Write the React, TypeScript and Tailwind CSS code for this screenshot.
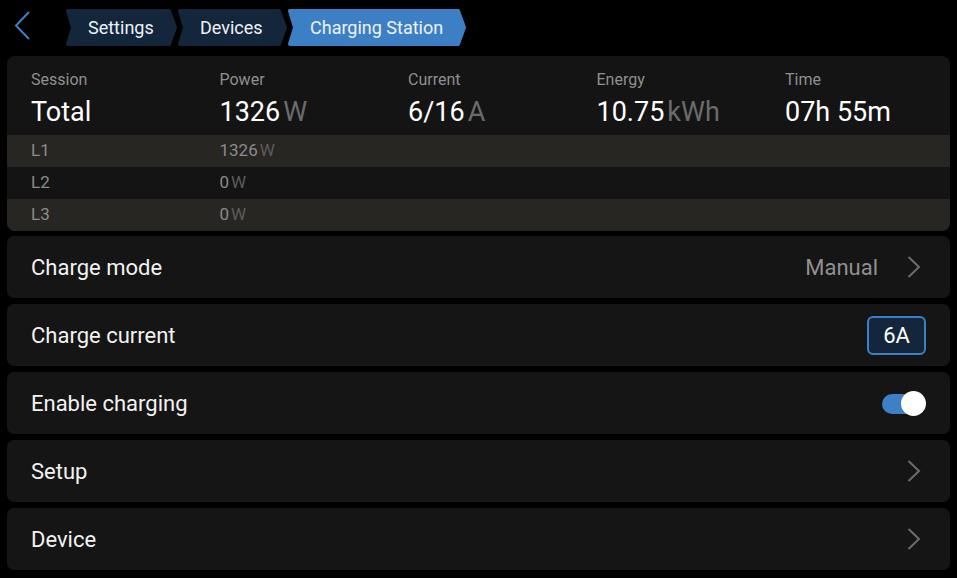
import type { ReactNode } from 'react';

const FONT = 'font-["Roboto","Liberation_Sans",sans-serif]';

type Stat = { label: string; value: string; unit?: string };

const STATS: Stat[] = [
  { label: 'Session', value: 'Total' },
  { label: 'Power', value: '1326', unit: 'W' },
  { label: 'Current', value: '6/16', unit: 'A' },
  { label: 'Energy', value: '10.75', unit: 'kWh' },
  { label: 'Time', value: '07h 55m' }
];

const PHASES = [
  { name: 'L1', power: '1326', striped: true },
  { name: 'L2', power: '0', striped: false },
  { name: 'L3', power: '0', striped: true }
];

function Crumb({ label, width, active }: { label: string; width: number; active?: boolean }) {
  const h = 37;
  const d = 6;
  const fill = active ? '#3d7fc4' : '#14263b';
  const pts = `2,2 ${width - d - 2},2 ${width - 2},${h / 2} ${width - d - 2},${h - 2} 2,${h - 2} ${d + 1},${h / 2}`;
  return (
    <div className="relative flex h-[37px] items-center pl-[22px]" style={{ width }}>
      <svg className="absolute inset-0" width={width} height={h} viewBox={`0 0 ${width} ${h}`}>
        <polygon points={pts} fill={fill} stroke={fill} strokeWidth={4} strokeLinejoin="round" />
      </svg>
      <span className="relative text-[18px] leading-none text-[#eef2f6]">{label}</span>
    </div>
  );
}

function Chevron() {
  return (
    <svg width="24" height="24" viewBox="0 0 24 24" fill="none">
      <path d="M6.5 2 L17 12 L6.5 22" stroke="#6c6c6c" strokeWidth="2" />
    </svg>
  );
}

function ListRow({ label, children }: { label: string; children?: ReactNode }) {
  return (
    <div className="flex h-[62px] items-center justify-between rounded-[7px] bg-[#151515] pl-6 pr-6">
      <span className="text-[22px] text-[#f2f2f2]">{label}</span>
      <div className="flex items-center">{children}</div>
    </div>
  );
}

export default function App() {
  return (
    <div className={`${FONT} h-[578px] w-[957px] overflow-hidden bg-black`}>
      <div className="flex h-[56px] items-start">
        <div className="ml-[13px] mt-[11px] h-[30px] w-[20px]">
          <svg width="20" height="30" viewBox="0 0 20 30" fill="none">
            <path d="M16 1 L3 14.5 L16 28" stroke="#3d80c5" strokeWidth="2" />
          </svg>
        </div>
        <div className="ml-[33px] mt-[9px] flex gap-px">
          <Crumb label="Settings" width={111} />
          <Crumb label="Devices" width={109} />
          <Crumb label="Charging Station" width={178} active />
        </div>
      </div>

      <div className="mx-[7px] overflow-hidden rounded-[8px] bg-[#141414]">
        <div className="flex h-[79px] pl-6 pt-[14px]">
          {STATS.map((stat) => (
            <div key={stat.label} className="w-[188.5px] shrink-0">
              <div className="text-[16px] leading-[19px] text-[#8f8f8f]">{stat.label}</div>
              <div className="mt-[7px] text-[27px] leading-[32px] text-white">
                {stat.value}
                {stat.unit && <span className="ml-[3px] text-[#6b6b6b]">{stat.unit}</span>}
              </div>
            </div>
          ))}
        </div>
        {PHASES.map((phase) => (
          <div
            key={phase.name}
            className={`flex h-[32px] items-center pl-6 text-[17px] ${phase.striped ? 'bg-[#282622]' : 'bg-[#141414]'}`}
          >
            <span className="w-[188.5px] text-[#8c8c8c]">{phase.name}</span>
            <span className="text-[#8a8a8a]">
              {phase.power}
              <span className="ml-[2px] text-[#5c5c5c]">W</span>
            </span>
          </div>
        ))}
      </div>

      <div className="mx-[7px] mt-[5px] flex flex-col gap-[6px]">
        <ListRow label="Charge mode">
          <span className="mr-[24px] text-[22px] text-[#909090]">Manual</span>
          <Chevron />
        </ListRow>
        <ListRow label="Charge current">
          <div className="flex h-[39px] w-[59px] items-center justify-center rounded-[6px] border-2 border-[#3d80c5] bg-[#14263b] text-[22px] text-white">
            6A
          </div>
        </ListRow>
        <ListRow label="Enable charging">
          <div className="relative h-[25px] w-[44px]">
            <div className="absolute left-0 right-[2px] top-[3px] h-[20px] rounded-full bg-[#3d80c5]" />
            <div className="absolute right-0 top-0 h-[25px] w-[25px] rounded-full bg-white" />
          </div>
        </ListRow>
        <ListRow label="Setup">
          <Chevron />
        </ListRow>
        <ListRow label="Device">
          <Chevron />
        </ListRow>
      </div>
    </div>
  );
}
